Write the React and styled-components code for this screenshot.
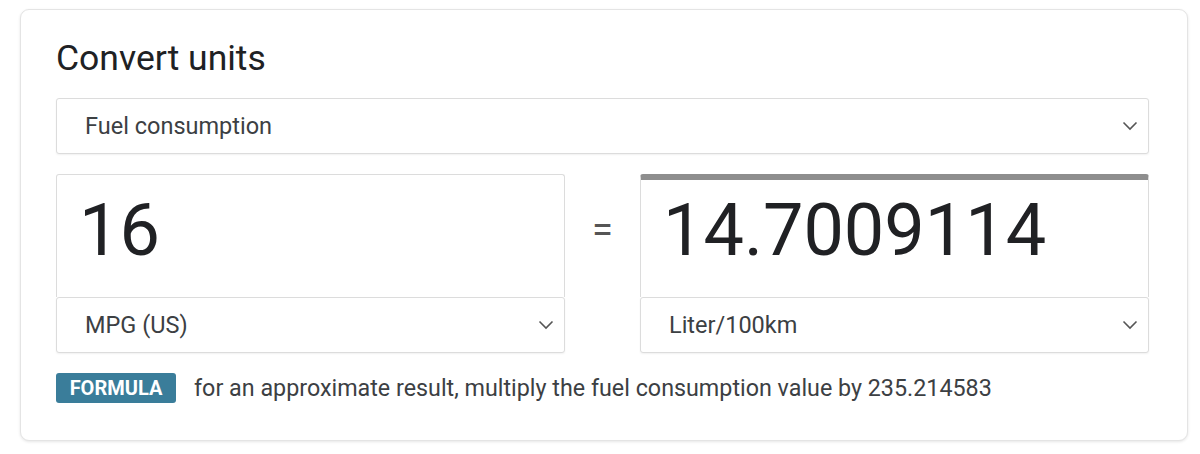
import styled, { createGlobalStyle } from "styled-components";

const GlobalStyle = createGlobalStyle`
  body {
    margin: 0;
    background: #ffffff;
    font-family: Roboto, "Liberation Sans", Arial, sans-serif;
  }
`;

const Page = styled.div`
  padding: 9px 12px 14px 20px;
`;

const Card = styled.div`
  width: 1168px;
  box-sizing: border-box;
  padding: 23px 38px 37px 35px;
  border: 1px solid #e4e4e4;
  border-radius: 9px;
  box-shadow: 0 1px 3px rgba(0, 0, 0, 0.1);
  background: #ffffff;
`;

const Title = styled.h2`
  margin: 0 0 15px;
  font-size: 35.5px;
  font-weight: 400;
  line-height: 50px;
  color: #202124;
`;

const SelectBox = styled.div`
  height: 56px;
  box-sizing: border-box;
  display: flex;
  align-items: center;
  justify-content: space-between;
  padding: 0 10px 0 28px;
  border: 1px solid #dcdcdc;
  border-radius: 3px;
  box-shadow: 0 1px 2px rgba(0, 0, 0, 0.06);
  font-size: 23.5px;
  color: #3c4043;
  background: #ffffff;
`;

const Row = styled.div`
  display: grid;
  grid-template-columns: 509px 1fr 509px;
  margin-top: 20px;
`;

const Column = styled.div`
  display: flex;
  flex-direction: column;
`;

const ValueBox = styled.div`
  height: 123px;
  box-sizing: border-box;
  padding: ${(p) => (p.$active ? "7px" : "12px")} 0 0 22px;
  border: 1px solid #dcdcdc;
  border-top: ${(p) => (p.$active ? "6px solid #8e8e8e" : "1px solid #dcdcdc")};
  border-bottom: none;
  border-radius: 3px 3px 0 0;
  font-size: 72px;
  line-height: 88px;
  color: #202124;
`;

const Equals = styled.div`
  display: flex;
  justify-content: center;
  padding-top: 34px;
  font-size: 38px;
  color: #555555;
`;

const FormulaRow = styled.div`
  display: flex;
  align-items: center;
  gap: 18px;
  margin-top: 20px;
`;

const Badge = styled.span`
  display: inline-flex;
  align-items: center;
  justify-content: center;
  width: 120px;
  height: 30px;
  border-radius: 3px;
  background: #3a7d9a;
  color: #ffffff;
  font-weight: 700;
  font-size: 20px;
`;

const FormulaText = styled.span`
  font-size: 23.3px;
  color: #3c4043;
`;

function Chevron() {
  return (
    <svg width="16" height="10" viewBox="0 0 16 10" fill="none">
      <path d="M1.5 1.5 L8 8 L14.5 1.5" stroke="#555" strokeWidth="1.6" />
    </svg>
  );
}

function UnitSelect({ label }) {
  return (
    <SelectBox>
      <span>{label}</span>
      <Chevron />
    </SelectBox>
  );
}

export default function App() {
  return (
    <Page>
      <GlobalStyle />
      <Card>
        <Title>Convert units</Title>
        <UnitSelect label="Fuel consumption" />
        <Row>
          <Column>
            <ValueBox>16</ValueBox>
            <UnitSelect label="MPG (US)" />
          </Column>
          <Equals>=</Equals>
          <Column>
            <ValueBox $active>14.7009114</ValueBox>
            <UnitSelect label="Liter/100km" />
          </Column>
        </Row>
        <FormulaRow>
          <Badge>FORMULA</Badge>
          <FormulaText>
            for an approximate result, multiply the fuel consumption value by 235.214583
          </FormulaText>
        </FormulaRow>
      </Card>
    </Page>
  );
}
